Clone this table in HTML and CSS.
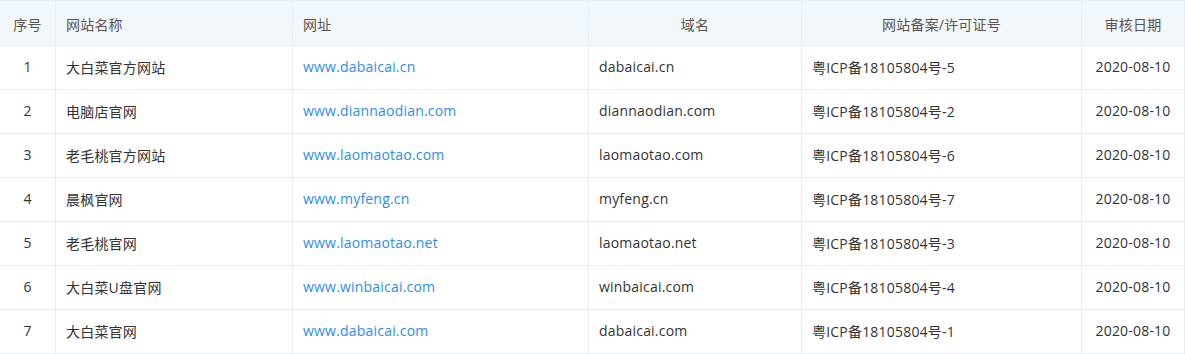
FILE: index.html
```html
<!DOCTYPE html>
<html lang="zh-CN">
<head>
<meta charset="utf-8">
<title>网站备案</title>
<link rel="stylesheet" href="styles.css">
</head>
<body>
<div class="table" role="table">
  <div class="row head" role="row">
    <div class="cell center">序号</div>
    <div class="cell">网站名称</div>
    <div class="cell">网址</div>
    <div class="cell center">域名</div>
    <div class="cell center">网站备案/许可证号</div>
    <div class="cell center">审核日期</div>
  </div>
  <div class="row" role="row">
    <div class="cell center">1</div>
    <div class="cell">大白菜官方网站</div>
    <div class="cell"><a class="link" href="#">www.dabaicai.cn</a></div>
    <div class="cell">dabaicai.cn</div>
    <div class="cell">粤ICP备18105804号-5</div>
    <div class="cell center">2020-08-10</div>
  </div>
  <div class="row" role="row">
    <div class="cell center">2</div>
    <div class="cell">电脑店官网</div>
    <div class="cell"><a class="link" href="#">www.diannaodian.com</a></div>
    <div class="cell">diannaodian.com</div>
    <div class="cell">粤ICP备18105804号-2</div>
    <div class="cell center">2020-08-10</div>
  </div>
  <div class="row" role="row">
    <div class="cell center">3</div>
    <div class="cell">老毛桃官方网站</div>
    <div class="cell"><a class="link" href="#">www.laomaotao.com</a></div>
    <div class="cell">laomaotao.com</div>
    <div class="cell">粤ICP备18105804号-6</div>
    <div class="cell center">2020-08-10</div>
  </div>
  <div class="row" role="row">
    <div class="cell center">4</div>
    <div class="cell">晨枫官网</div>
    <div class="cell"><a class="link" href="#">www.myfeng.cn</a></div>
    <div class="cell">myfeng.cn</div>
    <div class="cell">粤ICP备18105804号-7</div>
    <div class="cell center">2020-08-10</div>
  </div>
  <div class="row" role="row">
    <div class="cell center">5</div>
    <div class="cell">老毛桃官网</div>
    <div class="cell"><a class="link" href="#">www.laomaotao.net</a></div>
    <div class="cell">laomaotao.net</div>
    <div class="cell">粤ICP备18105804号-3</div>
    <div class="cell center">2020-08-10</div>
  </div>
  <div class="row" role="row">
    <div class="cell center">6</div>
    <div class="cell">大白菜U盘官网</div>
    <div class="cell"><a class="link" href="#">www.winbaicai.com</a></div>
    <div class="cell">winbaicai.com</div>
    <div class="cell">粤ICP备18105804号-4</div>
    <div class="cell center">2020-08-10</div>
  </div>
  <div class="row" role="row">
    <div class="cell center">7</div>
    <div class="cell">大白菜官网</div>
    <div class="cell"><a class="link" href="#">www.dabaicai.com</a></div>
    <div class="cell">dabaicai.com</div>
    <div class="cell">粤ICP备18105804号-1</div>
    <div class="cell center">2020-08-10</div>
  </div>
</div>
</body>
</html>
```

FILE: styles.css
```css
html, body {
  margin: 0;
  padding: 0;
  background: #ffffff;
}

body {
  font-family: "Open Sans", "Noto Sans CJK SC", sans-serif;
  font-size: 14px;
  color: #333333;
  letter-spacing: 0.2px;
}

.table {
  width: 1185px;
  border-top: 1px solid #e6edf4;
}

.row {
  display: grid;
  grid-template-columns: 56px 237px 296px 213px 280px 103px;
  height: 44px;
  border-bottom: 1px solid #e6edf4;
  box-sizing: border-box;
}

.row.head {
  height: 45px;
  background: #f1f7fb;
  color: #5a5550;
}

.cell {
  display: flex;
  align-items: center;
  padding: 0 10px 2px;
  border-right: 1px solid #e6edf4;
  box-sizing: border-box;
  white-space: nowrap;
  overflow: hidden;
}

.head .cell {
  padding-top: 2px;
  padding-bottom: 0;
}

.cell.center {
  justify-content: center;
}

.link {
  color: #2d8cf0;
  text-decoration: none;
}
```
